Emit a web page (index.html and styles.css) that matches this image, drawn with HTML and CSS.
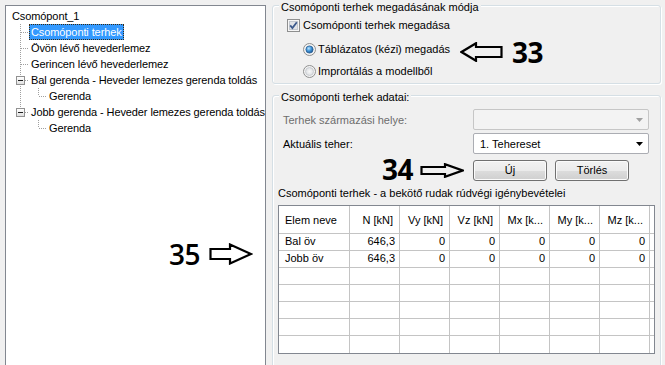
FILE: index.html
```html
<!DOCTYPE html>
<html lang="hu">
<head>
<meta charset="utf-8">
<title>Csomóponti terhek</title>
<link rel="stylesheet" href="styles.css">
</head>
<body>
<div class="app">
  <div class="tree">
    <div class="row root"><span class="label">Csomópont_1</span></div>
    <div class="row"><span class="c t"></span><span class="label sel">Csomóponti terhek</span></div>
    <div class="row"><span class="c t"></span><span class="label">Övön lévő hevederlemez</span></div>
    <div class="row"><span class="c t"></span><span class="label">Gerincen lévő hevederlemez</span></div>
    <div class="row"><span class="c t"><span class="box"></span></span><span class="label">Bal gerenda - Heveder lemezes gerenda toldás</span></div>
    <div class="row"><span class="c v"></span><span class="c l"></span><span class="label">Gerenda</span></div>
    <div class="row"><span class="c l"><span class="box"></span></span><span class="label">Jobb gerenda - Heveder lemezes gerenda toldás</span></div>
    <div class="row"><span class="c"></span><span class="c l"></span><span class="label">Gerenda</span></div>
    <div class="note n35">
      <span class="num thin">35</span>
      <svg width="44" height="22" viewBox="0 0 44 22"><polygon points="1.5,6 21,6 21,1.5 42,11 21,20.5 21,16 1.5,16" fill="none" stroke="#000" stroke-width="2.2" stroke-linejoin="miter"/></svg>
    </div>
  </div>

  <div class="side">
    <div class="group g1">
      <div class="gtitle">Csomóponti terhek megadásának módja</div>
      <div class="opt chk">
        <svg width="13" height="13" viewBox="0 0 13 13"><rect x="0.5" y="0.5" width="12" height="12" fill="#f6f6f6" stroke="#8e8f8f"/><rect x="2.5" y="2.5" width="8" height="8" fill="#e1e4e8" stroke="#c3c8cf"/><path d="M3.2 6.4 L5.4 9 L9.8 3.2" fill="none" stroke="#3c5a8c" stroke-width="1.8"/></svg>
        <span>Csomóponti terhek megadása</span>
      </div>
      <div class="opt rad first">
        <svg width="13" height="13" viewBox="0 0 13 13"><defs><radialGradient id="rb" cx="0.4" cy="0.35" r="0.7"><stop offset="0" stop-color="#bfe6ff"/><stop offset="0.5" stop-color="#3f95d8"/><stop offset="1" stop-color="#1a4f8a"/></radialGradient></defs><circle cx="6.5" cy="6.5" r="6" fill="#f3f3f3" stroke="#8e8f8f"/><circle cx="6.5" cy="6.5" r="3.6" fill="url(#rb)" stroke="#2a5f95" stroke-width="0.8"/></svg>
        <span>Táblázatos (kézi) megadás</span>
      </div>
      <div class="opt rad second">
        <svg width="13" height="13" viewBox="0 0 13 13"><defs><radialGradient id="rg" cx="0.5" cy="0.5" r="0.6"><stop offset="0" stop-color="#f8f8f8"/><stop offset="1" stop-color="#d6d9dd"/></radialGradient></defs><circle cx="6.5" cy="6.5" r="6" fill="#f3f3f3" stroke="#8e8f8f"/><circle cx="6.5" cy="6.5" r="4" fill="url(#rg)" stroke="#c4c8cd" stroke-width="0.8"/></svg>
        <span>Imprortálás a modellből</span>
      </div>
      <div class="note n33">
        <svg width="43" height="20" viewBox="0 0 43 20"><polygon points="41.5,5 16,5 16,1.2 1.5,10 16,18.8 16,15 41.5,15" fill="none" stroke="#000" stroke-width="2.2"/></svg>
        <span class="num">33</span>
      </div>
    </div>

    <div class="group g2">
      <div class="gtitle">Csomóponti terhek adatai:</div>
      <div class="frow r1">
        <span class="dis-text">Terhek származási helye:</span>
        <div class="combo dis"><span></span><svg width="7" height="4" viewBox="0 0 7 4"><polygon points="0,0 7,0 3.5,4" fill="#a0a0a0"/></svg></div>
      </div>
      <div class="frow r2">
        <span>Aktuális teher:</span>
        <div class="combo"><span>1. Tehereset</span><svg width="7" height="4" viewBox="0 0 7 4"><polygon points="0,0 7,0 3.5,4" fill="#000"/></svg></div>
      </div>
      <div class="frow r3">
        <div class="note n34">
          <span class="num">34</span>
          <svg width="44" height="15" viewBox="0 0 44 15"><polygon points="1.5,4 25,4 25,1.2 42.5,7.5 25,13.8 25,11 1.5,11" fill="none" stroke="#000" stroke-width="2.2"/></svg>
        </div>
        <div class="btns"><div class="btn">Új</div><div class="btn">Törlés</div></div>
      </div>
      <div class="ttitle">Csomóponti terhek - a bekötő rudak rúdvégi igénybevételei</div>
      <div class="tbl">
        <div class="hc l">Elem neve</div><div class="hc">N [kN]</div><div class="hc">Vy [kN]</div><div class="hc">Vz [kN]</div><div class="hc">Mx [k...</div><div class="hc">My [k...</div><div class="hc">Mz [k...</div><div class="hf"></div>
        <div class="dc l">Bal öv</div><div class="dc">646,3</div><div class="dc">0</div><div class="dc">0</div><div class="dc">0</div><div class="dc">0</div><div class="dc">0</div><div class="df"></div>
        <div class="dc l">Jobb öv</div><div class="dc">646,3</div><div class="dc">0</div><div class="dc">0</div><div class="dc">0</div><div class="dc">0</div><div class="dc">0</div><div class="df"></div>
        <div class="dc"></div><div class="dc"></div><div class="dc"></div><div class="dc"></div><div class="dc"></div><div class="dc"></div><div class="dc"></div><div class="df"></div>
        <div class="dc"></div><div class="dc"></div><div class="dc"></div><div class="dc"></div><div class="dc"></div><div class="dc"></div><div class="dc"></div><div class="df"></div>
        <div class="dc"></div><div class="dc"></div><div class="dc"></div><div class="dc"></div><div class="dc"></div><div class="dc"></div><div class="dc"></div><div class="df"></div>
        <div class="dc"></div><div class="dc"></div><div class="dc"></div><div class="dc"></div><div class="dc"></div><div class="dc"></div><div class="dc"></div><div class="df"></div>
        <div class="dc last"></div><div class="dc last"></div><div class="dc last"></div><div class="dc last"></div><div class="dc last"></div><div class="dc last"></div><div class="dc last"></div><div class="df last"></div>
      </div>
    </div>
  </div>
</div>
</body>
</html>
```

FILE: styles.css
```css
* { box-sizing: border-box; }
html, body { margin: 0; height: 365px; overflow: hidden; }
body {
  background: #f0f0f0;
  font-family: "Liberation Sans", Arial, sans-serif;
  font-size: 11px;
  color: #000;
}
.app { display: flex; gap: 6px; padding: 5px 0 0 5px; height: 365px; overflow: hidden; }

/* ---------- tree ---------- */
.tree {
  position: relative;
  flex: none;
  width: 261px;
  height: 372px;
  background: #fff;
  border: 1px solid #828790;
  padding: 2px 0 0 5px;
  overflow: hidden;
  white-space: nowrap;
}
.row { display: flex; height: 16px; line-height: 16px; }
.label { padding: 0 2px; height: 16px; letter-spacing: -0.1px; }
.root .label { margin-left: -1px; }
.sel {
  background: #3399ff;
  color: #fff;
  outline: 1px dotted #3a2a10;
  outline-offset: -1px;
}
.c {
  flex: none;
  width: 18px;
  height: 16px;
  display: flex;
  align-items: center;
  padding-left: 5px;
  background-repeat: no-repeat;
}
.c.t {
  background-image:
    repeating-linear-gradient(to bottom, #a0a0a0 0 1px, transparent 1px 2px),
    repeating-linear-gradient(to right, #a0a0a0 0 1px, transparent 1px 2px);
  background-size: 1px 16px, 8px 1px;
  background-position: 9px 0, 10px 8px;
}
.c.v {
  background-image: repeating-linear-gradient(to bottom, #a0a0a0 0 1px, transparent 1px 2px);
  background-size: 1px 16px;
  background-position: 9px 0;
}
.c.l {
  background-image:
    repeating-linear-gradient(to bottom, #a0a0a0 0 1px, transparent 1px 2px),
    repeating-linear-gradient(to right, #a0a0a0 0 1px, transparent 1px 2px);
  background-size: 1px 8px, 8px 1px;
  background-position: 9px 0, 10px 8px;
}
.box {
  width: 9px;
  height: 9px;
  border: 1px solid #919191;
  background: linear-gradient(#ffffff, #e0e0e0);
  display: flex;
  align-items: center;
  justify-content: center;
}
.box::before { content: ""; width: 5px; height: 1px; background: #1e1e1e; }

/* ---------- annotations ---------- */
.note { display: flex; align-items: center; }
.num {
  font-family: "Open Sans", "Liberation Sans", sans-serif;
  font-weight: 700;
  font-size: 28px;
  line-height: 28px;
  letter-spacing: -0.5px;
}
.num.thin { font-weight: 600; }
.n35 { position: absolute; left: 163px; top: 234px; gap: 9px; }
.n33 { position: absolute; left: 187px; top: 32px; gap: 9px; }
.n34 { justify-content: flex-end; gap: 7px; padding-right: 9px; height: 21px; }
.n34 .num { margin-top: -4px; }

/* ---------- groups ---------- */
.side { flex: none; width: 389px; display: flex; flex-direction: column; }
.group {
  position: relative;
  border: 1px solid #d5dfe5;
  border-radius: 3px;
  box-shadow: inset 1px 1px 0 #fff, 1px 1px 0 #fff;
}
.gtitle {
  width: fit-content;
  margin: -5px 0 0 6px;
  padding: 0 2px;
  background: #f0f0f0;
  line-height: 13px;
}
.g1 { flex: none; height: 79px; }
.opt { display: flex; align-items: center; height: 16px; }
.opt svg { flex: none; }
.chk { gap: 3px; margin: 3px 0 0 14px; }
.rad { gap: 2px; margin-left: 30px; }
.rad.first { margin-top: 8px; }
.rad.second { margin-top: 6px; }

.g2 { flex: none; margin-top: 11px; padding-bottom: 30px; }
.frow {
  display: grid;
  grid-template-columns: 190px 176px;
  align-items: center;
  height: 21px;
  margin-left: 10px;
}
.r1 { margin-top: 5px; }
.r2 { margin-top: 3px; }
.r3 { margin-top: 6px; margin-left: 10px; }
.dis-text { color: #6d6d6d; }
.combo {
  height: 21px;
  border: 1px solid #abadb3;
  border-radius: 2px;
  background: #fff;
  display: flex;
  align-items: center;
  justify-content: space-between;
  padding: 0 5px 0 6px;
}
.combo.dis { background: #f3f3f3; border-color: #c6c6c6; }
.btns { display: flex; gap: 8px; }
.btn {
  width: 74px;
  height: 21px;
  border: 1px solid #707070;
  border-radius: 3px;
  background: linear-gradient(#f2f2f2 0%, #ebebeb 50%, #dddddd 50%, #cfcfcf 100%);
  box-shadow: inset 0 0 0 1px #fbfbfb;
  text-align: center;
  line-height: 19px;
}
.ttitle { margin: 6px 0 0 5px; line-height: 13px; }

/* ---------- table ---------- */
.tbl {
  margin: 5px 0 0 5px;
  width: 377px;
  height: 149px;
  border: 1px solid #828790;
  background: #fff;
  display: grid;
  grid-template-columns: 71px repeat(6, 50px) 4px;
  grid-template-rows: 28px repeat(7, 17px);
}
.hc, .dc {
  border-right: 1px solid #c4c4c4;
  border-bottom: 1px solid #c4c4c4;
  text-align: right;
  white-space: nowrap;
  overflow: hidden;
}
.hc { padding: 8px 6px 0 6px; line-height: 13px; }
.hc.l, .dc.l { text-align: left; }
.dc { padding: 0 4px 0 6px; line-height: 15px; }
.hf, .df { border-bottom: 1px solid #c4c4c4; }
.last { border-bottom: none; }
```
